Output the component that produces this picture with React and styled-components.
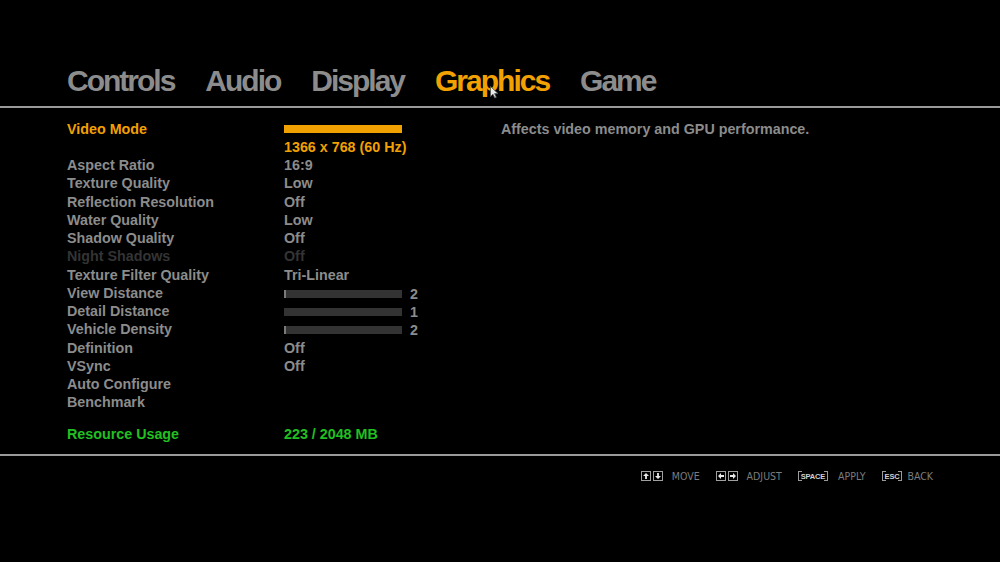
import React from 'react';
import styled, { createGlobalStyle } from 'styled-components';

const colors = {
  BG: '#000000',
  GREY: '#8c8c8c',
  DIM: '#343434',
  ORANGE: '#f2a102',
  GREEN: '#20c020',
  LINE: '#9a9a9a',
  BAR: '#333333',
  HINT: '#7c7c7c',
};

const GlobalStyle = createGlobalStyle`
  html, body {
    margin: 0;
    padding: 0;
    background: ${colors.BG};
  }
  body {
    width: 1000px;
    height: 562px;
    overflow: hidden;
    font-family: "Liberation Sans", Arial, sans-serif;
  }
`;

const Screen = styled.div`
  position: relative;
  width: 1000px;
  height: 562px;
  background: ${colors.BG};
  display: flex;
  flex-direction: column;
`;

const TabBar = styled.nav`
  display: flex;
  gap: 31px;
  padding: 64px 67px 8px;
  border-bottom: 2px solid ${colors.LINE};
`;

const Tab = styled.div`
  font-size: 30px;
  line-height: 34px;
  font-weight: 700;
  letter-spacing: -2px;
  color: ${(p) => (p.$active ? colors.ORANGE : colors.GREY)};
`;

const Body = styled.div`
  display: grid;
  grid-template-columns: 217px 217px 1fr;
  padding: 11.5px 67px 11px;
  border-bottom: 2px solid ${colors.LINE};
`;

const List = styled.div`
  grid-column: 1 / 3;
  display: grid;
  grid-template-columns: 217px 217px;
`;

const Cell = styled.div`
  height: 18.25px;
  font-size: 14.3px;
  line-height: 18.25px;
  font-weight: 700;
  white-space: nowrap;
  display: flex;
  align-items: center;
  color: ${(p) => p.$color || colors.GREY};
  margin-top: ${(p) => (p.$gap ? '13.5px' : '0')};
`;

const Description = styled.div`
  grid-column: 3;
  grid-row: 1;
  font-size: 14.3px;
  line-height: 18.25px;
  font-weight: 700;
  color: ${colors.GREY};
`;

const ModeBar = styled.div`
  width: 118px;
  height: 8px;
  background: ${colors.ORANGE};
`;

const SliderTrack = styled.div`
  width: 118px;
  height: 8px;
  margin-top: 2px;
  background: ${colors.BAR};
  border-left: 2px solid ${(p) => (p.$tick ? '#7a7a7a' : colors.BAR)};
  box-sizing: border-box;
`;

const SliderValue = styled.span`
  margin-left: 8px;
  margin-top: 2px;
`;

const Footer = styled.footer`
  display: flex;
  justify-content: flex-end;
  align-items: center;
  padding: 14px 67px 0;
  gap: 16px;
`;

const Hint = styled.div`
  display: flex;
  align-items: center;
  height: 12px;
  font-family: "Liberation Sans Narrow", "DejaVu Sans Condensed", "Liberation Sans", sans-serif;
  font-size: 10.5px;
  color: ${colors.HINT};
`;

const KeyBox = styled.span`
  width: 10px;
  height: 10px;
  box-sizing: border-box;
  border: 1px solid #a0a0a0;
  display: inline-flex;
  align-items: center;
  justify-content: center;
  margin-right: ${(p) => (p.$last ? '9px' : '2px')};
`;

const Bracket = styled.span`
  height: 10px;
  box-sizing: border-box;
  display: inline-flex;
  align-items: center;
  font-family: "Liberation Sans", sans-serif;
  font-size: 7.5px;
  font-weight: 700;
  letter-spacing: -0.2px;
  color: #d0d0d0;
  padding: 0 2px;
  margin-right: ${(p) => p.$mr || '8px'};
  border-left: 1px solid #9a9a9a;
  border-right: 1px solid #9a9a9a;
  background:
    linear-gradient(#9a9a9a, #9a9a9a) left top / 3px 1px no-repeat,
    linear-gradient(#9a9a9a, #9a9a9a) left bottom / 3px 1px no-repeat,
    linear-gradient(#9a9a9a, #9a9a9a) right top / 3px 1px no-repeat,
    linear-gradient(#9a9a9a, #9a9a9a) right bottom / 3px 1px no-repeat;
`;

const Cursor = styled.svg`
  position: absolute;
  left: 490px;
  top: 86px;
`;

const Arrow = ({ dir }) => {
  const rot = { up: 0, right: 90, down: 180, left: 270 }[dir];
  return (
    <svg width="6" height="6" viewBox="0 0 6 6" style={{ transform: `rotate(${rot}deg)` }}>
      <path d="M3 0 L6 3 L3.9 3 L3.9 6 L2.1 6 L2.1 3 L0 3 Z" fill="#e8e8e8" />
    </svg>
  );
};

const tabs = ['Controls', 'Audio', 'Display', 'Graphics', 'Game'];

const rows = [
  { label: 'Aspect Ratio', value: '16:9' },
  { label: 'Texture Quality', value: 'Low' },
  { label: 'Reflection Resolution', value: 'Off' },
  { label: 'Water Quality', value: 'Low' },
  { label: 'Shadow Quality', value: 'Off' },
  { label: 'Night Shadows', value: 'Off', dim: true },
  { label: 'Texture Filter Quality', value: 'Tri-Linear' },
  { label: 'View Distance', slider: '2', tick: true },
  { label: 'Detail Distance', slider: '1' },
  { label: 'Vehicle Density', slider: '2', tick: true },
  { label: 'Definition', value: 'Off' },
  { label: 'VSync', value: 'Off' },
  { label: 'Auto Configure', value: '' },
  { label: 'Benchmark', value: '' },
];

const App = () => (
  <Screen>
    <GlobalStyle />
    <TabBar>
      {tabs.map((t) => (
        <Tab key={t} $active={t === 'Graphics'}>{t}</Tab>
      ))}
    </TabBar>
    <Body>
      <List>
        <Cell $color={colors.ORANGE}>Video Mode</Cell>
        <Cell><ModeBar /></Cell>
        <Cell />
        <Cell $color={colors.ORANGE}>1366 x 768 (60 Hz)</Cell>
        {rows.map((r) => (
          <React.Fragment key={r.label}>
            <Cell $color={r.dim ? colors.DIM : undefined}>{r.label}</Cell>
            <Cell $color={r.dim ? colors.DIM : undefined}>
              {r.slider ? (
                <>
                  <SliderTrack $tick={r.tick} />
                  <SliderValue>{r.slider}</SliderValue>
                </>
              ) : (
                r.value
              )}
            </Cell>
          </React.Fragment>
        ))}
        <Cell $color={colors.GREEN} $gap>Resource Usage</Cell>
        <Cell $color={colors.GREEN} $gap>223 / 2048 MB</Cell>
      </List>
      <Description>Affects video memory and GPU performance.</Description>
    </Body>
    <Footer>
      <Hint>
        <KeyBox><Arrow dir="up" /></KeyBox>
        <KeyBox $last><Arrow dir="down" /></KeyBox>
        MOVE
      </Hint>
      <Hint>
        <KeyBox><Arrow dir="left" /></KeyBox>
        <KeyBox $last><Arrow dir="right" /></KeyBox>
        ADJUST
      </Hint>
      <Hint>
        <Bracket $mr="10px">SPACE</Bracket>
        APPLY
      </Hint>
      <Hint>
        <Bracket $mr="5px">ESC</Bracket>
        BACK
      </Hint>
    </Footer>
    <Cursor width="9" height="13" viewBox="0 0 9 13">
      <path d="M0.5 0.5 L0.5 10.5 L3 8.2 L4.8 12 L6.3 11.3 L4.6 7.6 L8 7.6 Z" fill="#e8e8e8" stroke="#555" strokeWidth="0.8" />
    </Cursor>
  </Screen>
);

export default App;
